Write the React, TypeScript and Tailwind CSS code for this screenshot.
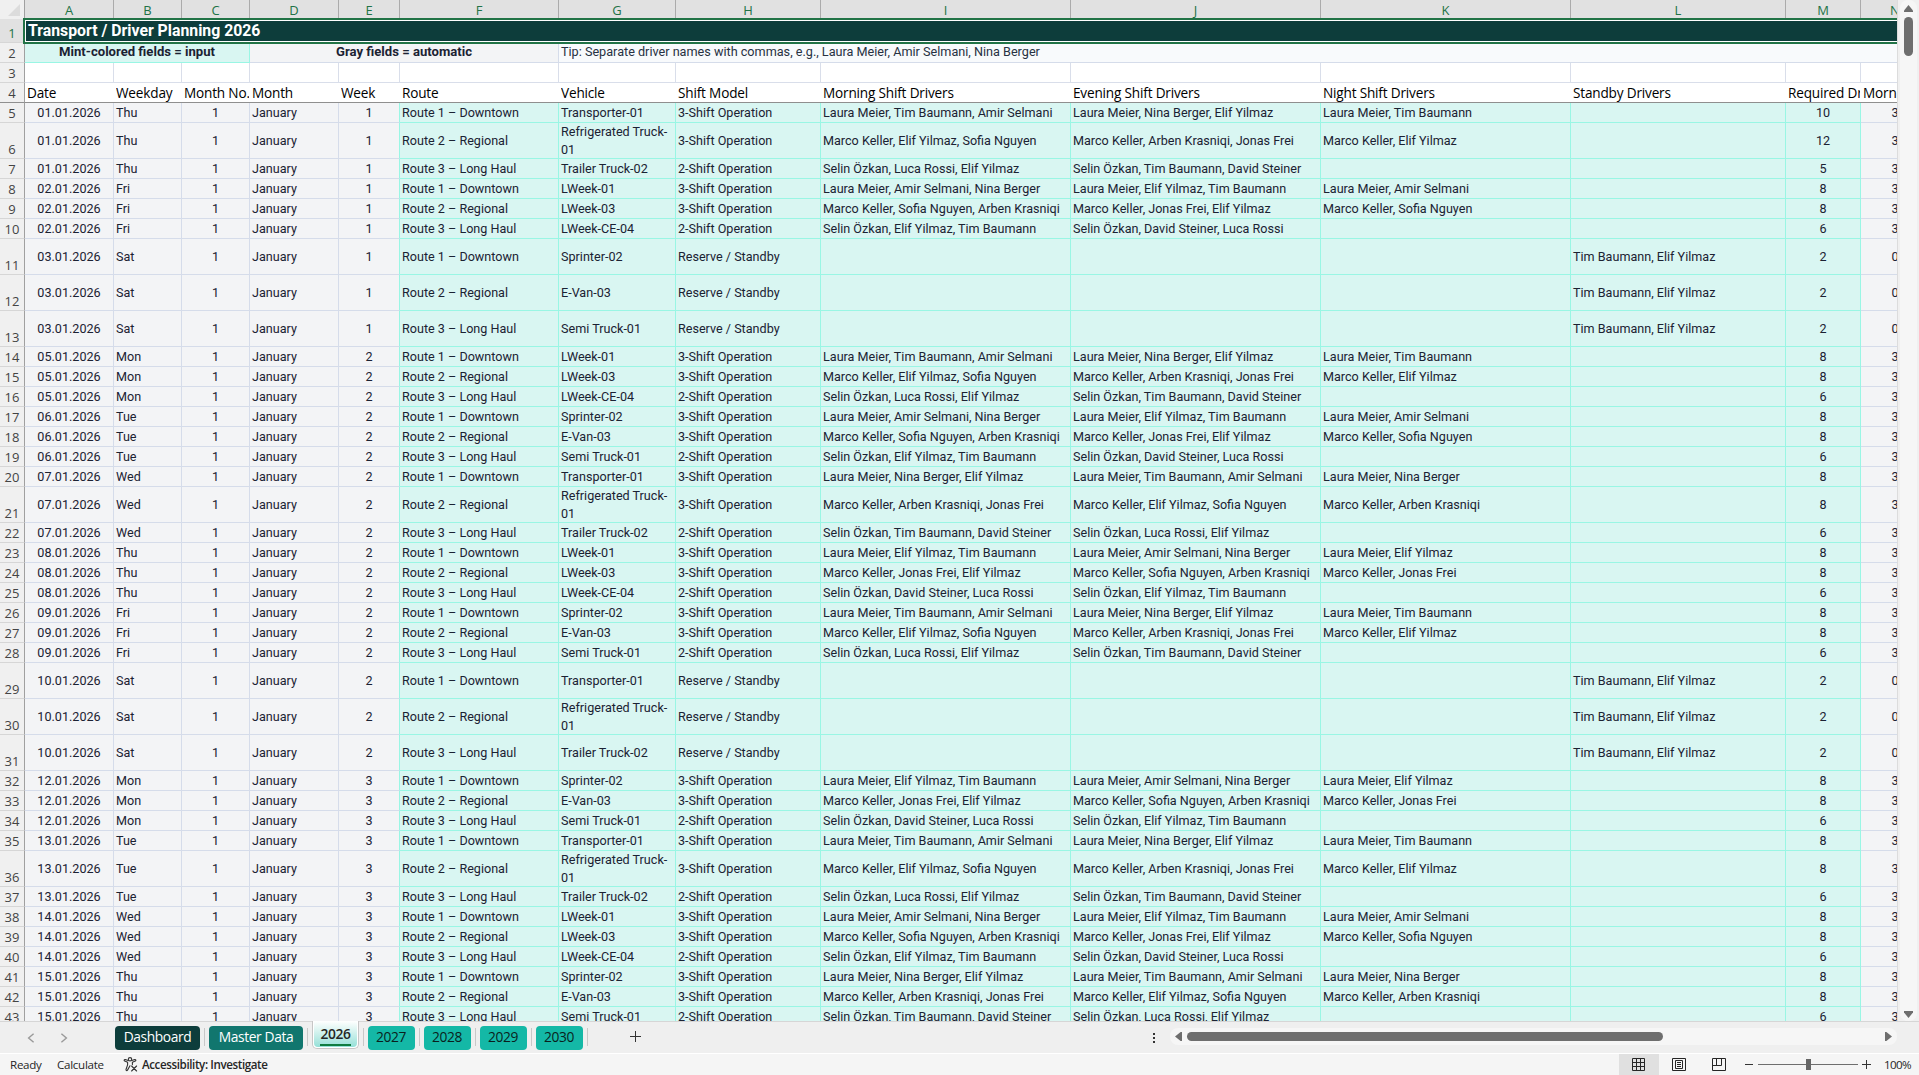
import React from "react";

type Shift = [string, string, string, string, string];
type Trip = {
  row: number;
  date: string;
  day: string;
  week: number;
  route: number;
  vehicle: string;
  drivers: Shift;
  required: number;
};

const COLUMNS = ["A", "B", "C", "D", "E", "F", "G", "H", "I", "J", "K", "L", "M", "N"];
const GRID =
  "grid shrink-0 grid-rows-[minmax(0,1fr)] grid-cols-[25px_89px_68px_68px_89px_61px_159px_117px_145px_250px_250px_250px_215px_75px_69px]";

const HEADINGS = [
  "Date", "Weekday", "Month No.", "Month", "Week", "Route", "Vehicle", "Shift Model",
  "Morning Shift Drivers", "Evening Shift Drivers", "Night Shift Drivers",
  "Standby Drivers", "Required Drivers", "Morning Drivers",
];

const ROUTES = ["Route 1 – Downtown", "Route 2 – Regional", "Route 3 – Long Haul"];

const RAW = `01.01.2026|Thu|1|Transporter-01|Laura Meier, Tim Baumann, Amir Selmani|Laura Meier, Nina Berger, Elif Yilmaz|Laura Meier, Tim Baumann|10
01.01.2026|Thu|1|Refrigerated Truck-01|Marco Keller, Elif Yilmaz, Sofia Nguyen|Marco Keller, Arben Krasniqi, Jonas Frei|Marco Keller, Elif Yilmaz|12
01.01.2026|Thu|1|Trailer Truck-02|Selin Özkan, Luca Rossi, Elif Yilmaz|Selin Özkan, Tim Baumann, David Steiner||5
02.01.2026|Fri|1|LWeek-01|Laura Meier, Amir Selmani, Nina Berger|Laura Meier, Elif Yilmaz, Tim Baumann|Laura Meier, Amir Selmani|8
02.01.2026|Fri|1|LWeek-03|Marco Keller, Sofia Nguyen, Arben Krasniqi|Marco Keller, Jonas Frei, Elif Yilmaz|Marco Keller, Sofia Nguyen|8
02.01.2026|Fri|1|LWeek-CE-04|Selin Özkan, Elif Yilmaz, Tim Baumann|Selin Özkan, David Steiner, Luca Rossi||6
03.01.2026|Sat|1|Sprinter-02||||2
03.01.2026|Sat|1|E-Van-03||||2
03.01.2026|Sat|1|Semi Truck-01||||2
05.01.2026|Mon|2|LWeek-01|Laura Meier, Tim Baumann, Amir Selmani|Laura Meier, Nina Berger, Elif Yilmaz|Laura Meier, Tim Baumann|8
05.01.2026|Mon|2|LWeek-03|Marco Keller, Elif Yilmaz, Sofia Nguyen|Marco Keller, Arben Krasniqi, Jonas Frei|Marco Keller, Elif Yilmaz|8
05.01.2026|Mon|2|LWeek-CE-04|Selin Özkan, Luca Rossi, Elif Yilmaz|Selin Özkan, Tim Baumann, David Steiner||6
06.01.2026|Tue|2|Sprinter-02|Laura Meier, Amir Selmani, Nina Berger|Laura Meier, Elif Yilmaz, Tim Baumann|Laura Meier, Amir Selmani|8
06.01.2026|Tue|2|E-Van-03|Marco Keller, Sofia Nguyen, Arben Krasniqi|Marco Keller, Jonas Frei, Elif Yilmaz|Marco Keller, Sofia Nguyen|8
06.01.2026|Tue|2|Semi Truck-01|Selin Özkan, Elif Yilmaz, Tim Baumann|Selin Özkan, David Steiner, Luca Rossi||6
07.01.2026|Wed|2|Transporter-01|Laura Meier, Nina Berger, Elif Yilmaz|Laura Meier, Tim Baumann, Amir Selmani|Laura Meier, Nina Berger|8
07.01.2026|Wed|2|Refrigerated Truck-01|Marco Keller, Arben Krasniqi, Jonas Frei|Marco Keller, Elif Yilmaz, Sofia Nguyen|Marco Keller, Arben Krasniqi|8
07.01.2026|Wed|2|Trailer Truck-02|Selin Özkan, Tim Baumann, David Steiner|Selin Özkan, Luca Rossi, Elif Yilmaz||6
08.01.2026|Thu|2|LWeek-01|Laura Meier, Elif Yilmaz, Tim Baumann|Laura Meier, Amir Selmani, Nina Berger|Laura Meier, Elif Yilmaz|8
08.01.2026|Thu|2|LWeek-03|Marco Keller, Jonas Frei, Elif Yilmaz|Marco Keller, Sofia Nguyen, Arben Krasniqi|Marco Keller, Jonas Frei|8
08.01.2026|Thu|2|LWeek-CE-04|Selin Özkan, David Steiner, Luca Rossi|Selin Özkan, Elif Yilmaz, Tim Baumann||6
09.01.2026|Fri|2|Sprinter-02|Laura Meier, Tim Baumann, Amir Selmani|Laura Meier, Nina Berger, Elif Yilmaz|Laura Meier, Tim Baumann|8
09.01.2026|Fri|2|E-Van-03|Marco Keller, Elif Yilmaz, Sofia Nguyen|Marco Keller, Arben Krasniqi, Jonas Frei|Marco Keller, Elif Yilmaz|8
09.01.2026|Fri|2|Semi Truck-01|Selin Özkan, Luca Rossi, Elif Yilmaz|Selin Özkan, Tim Baumann, David Steiner||6
10.01.2026|Sat|2|Transporter-01||||2
10.01.2026|Sat|2|Refrigerated Truck-01||||2
10.01.2026|Sat|2|Trailer Truck-02||||2
12.01.2026|Mon|3|Sprinter-02|Laura Meier, Elif Yilmaz, Tim Baumann|Laura Meier, Amir Selmani, Nina Berger|Laura Meier, Elif Yilmaz|8
12.01.2026|Mon|3|E-Van-03|Marco Keller, Jonas Frei, Elif Yilmaz|Marco Keller, Sofia Nguyen, Arben Krasniqi|Marco Keller, Jonas Frei|8
12.01.2026|Mon|3|Semi Truck-01|Selin Özkan, David Steiner, Luca Rossi|Selin Özkan, Elif Yilmaz, Tim Baumann||6
13.01.2026|Tue|3|Transporter-01|Laura Meier, Tim Baumann, Amir Selmani|Laura Meier, Nina Berger, Elif Yilmaz|Laura Meier, Tim Baumann|8
13.01.2026|Tue|3|Refrigerated Truck-01|Marco Keller, Elif Yilmaz, Sofia Nguyen|Marco Keller, Arben Krasniqi, Jonas Frei|Marco Keller, Elif Yilmaz|8
13.01.2026|Tue|3|Trailer Truck-02|Selin Özkan, Luca Rossi, Elif Yilmaz|Selin Özkan, Tim Baumann, David Steiner||6
14.01.2026|Wed|3|LWeek-01|Laura Meier, Amir Selmani, Nina Berger|Laura Meier, Elif Yilmaz, Tim Baumann|Laura Meier, Amir Selmani|8
14.01.2026|Wed|3|LWeek-03|Marco Keller, Sofia Nguyen, Arben Krasniqi|Marco Keller, Jonas Frei, Elif Yilmaz|Marco Keller, Sofia Nguyen|8
14.01.2026|Wed|3|LWeek-CE-04|Selin Özkan, Elif Yilmaz, Tim Baumann|Selin Özkan, David Steiner, Luca Rossi||6
15.01.2026|Thu|3|Sprinter-02|Laura Meier, Nina Berger, Elif Yilmaz|Laura Meier, Tim Baumann, Amir Selmani|Laura Meier, Nina Berger|8
15.01.2026|Thu|3|E-Van-03|Marco Keller, Arben Krasniqi, Jonas Frei|Marco Keller, Elif Yilmaz, Sofia Nguyen|Marco Keller, Arben Krasniqi|8
15.01.2026|Thu|3|Semi Truck-01|Selin Özkan, Tim Baumann, David Steiner|Selin Özkan, Luca Rossi, Elif Yilmaz||6`;

const TRIPS: Trip[] = RAW.split("\n").map((line, i) => {
  const [date, day, week, vehicle, morning, evening, night, required] = line.split("|");
  const reserve = day === "Sat";
  const model = reserve ? "Reserve / Standby" : i % 3 === 2 ? "2-Shift Operation" : "3-Shift Operation";
  return {
    row: i + 5,
    date,
    day,
    week: Number(week),
    route: i % 3,
    vehicle,
    drivers: [model, morning, evening, night, reserve ? "Tim Baumann, Elif Yilmaz" : ""],
    required: Number(required),
  };
});

function RowNumber({ n, active = false, frozen = false }: { n: number; active?: boolean; frozen?: boolean }) {
  return (
    <div
      className={`flex items-end justify-center border-r border-b border-r-[#a0a0a0] font-['Open_Sans',sans-serif] text-[13px] leading-[18px] ${
        active ? "bg-[#e1e1e1] text-[#217346]" : "bg-[#f0f0f0] text-[#444444]"
      } ${frozen ? "border-b-[#8f8f8f]" : "border-b-[#d6d6d6]"}`}
    >
      {n}
    </div>
  );
}

function Auto({ children, center = false, mintEdge = false }: { children: React.ReactNode; center?: boolean; mintEdge?: boolean }) {
  return (
    <div
      className={`flex items-center border-r border-b border-b-[#d5dcea] bg-[#f3f4f6] ${
        mintEdge ? "border-r-[#99f6e4]" : "border-r-[#d5dcea]"
      } ${center ? "justify-center" : "pl-[2px]"}`}
    >
      {children}
    </div>
  );
}

function Input({ children, center = false, wrap = false }: { children?: React.ReactNode; center?: boolean; wrap?: boolean }) {
  return (
    <div
      className={`flex min-h-0 items-center border-r border-b border-[#99f6e4] bg-[#d9f6f2] ${
        center ? "justify-center" : "pl-[2px]"
      } ${wrap ? "leading-[18px] whitespace-normal" : ""}`}
    >
      {children}
    </div>
  );
}

function TripRow({ trip }: { trip: Trip }) {
  const wraps = trip.vehicle.startsWith("Refrigerated");
  const reserve = trip.day === "Sat";
  return (
    <div className={`${GRID} ${wraps || reserve ? "h-[36px]" : "h-[20px]"}`}>
      <RowNumber n={trip.row} />
      <Auto center>{trip.date}</Auto>
      <Auto>{trip.day}</Auto>
      <Auto center>1</Auto>
      <Auto>January</Auto>
      <Auto center mintEdge>{trip.week}</Auto>
      <Input>{ROUTES[trip.route]}</Input>
      <Input wrap={wraps}>
        {wraps ? <span>Refrigerated Truck-<br />01</span> : trip.vehicle}
      </Input>
      {trip.drivers.map((d, i) => (
        <Input key={i}>{d}</Input>
      ))}
      <Input center>{trip.required}</Input>
      <Auto center>{reserve ? 0 : 3}</Auto>
    </div>
  );
}

function Sheet() {
  return (
    <div className="relative flex h-[1021px] w-[1897px] flex-col overflow-hidden bg-white font-['Roboto',sans-serif] text-[12.6px] leading-[18px] whitespace-nowrap text-[#1b2233]">
      <div className={`${GRID} h-[19px] bg-[#e1e1e1]`}>
        <div className="flex items-end justify-end border-r border-[#a0a0a0] bg-[#f0f0f0] pr-[4px] pb-[3px]">
          <svg width="12" height="12" viewBox="0 0 12 12">
            <path d="M12 0v12H0z" fill="#dcdcdc" />
          </svg>
        </div>
        {COLUMNS.map((c) => (
          <div
            key={c}
            className="border-r border-[#ababab] text-center font-['Open_Sans',sans-serif] text-[13px] leading-[20px] text-[#217346]"
          >
            {c}
          </div>
        ))}
      </div>

      <div className={`${GRID} h-[24px]`}>
        <RowNumber n={1} active />
        <div className="col-span-14 flex items-center bg-[#0d3d3b] pl-[3px] text-[15.8px] font-bold text-white">
          Transport / Driver Planning 2026
        </div>
      </div>

      <div className={`${GRID} h-[20px]`}>
        <RowNumber n={2} />
        <div className="col-span-3 flex items-center justify-center border-r border-b border-[#99f6e4] bg-[#d9f6f2] pb-[1px] text-[13.1px] font-bold">
          Mint-colored fields = input
        </div>
        <div className="col-span-3 flex items-center justify-center border-r border-b border-[#d5dcea] bg-[#f3f4f6] pb-[1px] text-[13.1px] font-bold">
          Gray fields = automatic
        </div>
        <div className="col-span-8 flex items-center border-b border-[#d5dcea] bg-[#f8fafc] pb-[1px] pl-[2px] text-[12.65px] text-[#273142]">
          Tip: Separate driver names with commas, e.g., Laura Meier, Amir Selmani, Nina Berger
        </div>
      </div>

      <div className={`${GRID} h-[20px]`}>
        <RowNumber n={3} />
        {COLUMNS.map((c) => (
          <div key={c} className="border-r border-b border-[#d9deea]" />
        ))}
      </div>

      <div className={`${GRID} h-[20px]`}>
        <RowNumber n={4} frozen />
        {HEADINGS.map((h) => (
          <div key={h} className="min-w-0 border-b border-[#8f8f8f] pr-px pl-[2px]">
            <div className="h-[19px] overflow-hidden font-['Open_Sans',sans-serif] text-[13.6px] leading-[20px] tracking-[-0.18px] text-black">
              {h}
            </div>
          </div>
        ))}
      </div>

      {TRIPS.map((t) => (
        <TripRow key={t.row} trip={t} />
      ))}

      {/* selection frame around the merged title cell */}
      <div className="absolute top-[18px] left-[23px] h-[26px] w-[1900px] border-2 border-[#217346]">
        <div className="h-full w-full border border-white" />
      </div>
    </div>
  );
}

function VerticalScroll() {
  return (
    <div className="flex h-[1021px] w-[22px] justify-center border-l border-[#dcdcdc] bg-[#f0f0f0] pr-[1px]">
      <div className="flex w-[17px] flex-col items-center rounded-[8px] bg-[#f6f6f6] pt-[5px] pb-[3px]">
        <svg width="9" height="7" viewBox="0 0 9 7">
          <path d="M4.5 0 9 5.6V7H0V5.6z" fill="#6e6e6e" />
        </svg>
        <div className="mt-[5px] h-[39px] w-[9px] rounded-full bg-[#6e6e6e]" />
        <svg className="mt-auto" width="9" height="7" viewBox="0 0 9 7">
          <path d="M4.5 7 9 1.4V0H0v1.4z" fill="#6e6e6e" />
        </svg>
      </div>
    </div>
  );
}

function Divider() {
  return <div className="mx-[4px] mt-[6px] h-[18px] w-px shrink-0 bg-[#c8c8c8]" />;
}

const TAB = "mt-[4px] flex h-[24px] shrink-0 items-center justify-center rounded-[4px] pb-[1px]";

function TabBar() {
  return (
    <div className="flex h-[32px] border-t border-[#d6d6d6] bg-[#efefef] font-['Open_Sans',sans-serif] text-[13.8px] tracking-[-0.4px]">
      <div className="flex w-[115px] items-center gap-[25px] pl-[27px]">
        <svg width="8" height="10" viewBox="0 0 8 10" fill="none" stroke="#9a9a9a" strokeWidth="1.4">
          <path d="M6.6.7 1.6 5l5 4.3" />
        </svg>
        <svg width="8" height="10" viewBox="0 0 8 10" fill="none" stroke="#9a9a9a" strokeWidth="1.4">
          <path d="m1.4.7 5 4.3-5 4.3" />
        </svg>
      </div>
      <div className={`${TAB} w-[85px] bg-[#0d3d3b] text-white`}>Dashboard</div>
      <Divider />
      <div className={`${TAB} w-[94px] bg-[#11766e] text-white`}>Master Data</div>
      <Divider />
      <div className="-mt-px flex h-[28px] w-[47px] shrink-0 rounded-b-[5px] border-x border-b border-[#c6c6c6] bg-white px-[1px] pb-[1px]">
        <div className="flex w-full flex-col items-center rounded-b-[4px] bg-linear-to-b from-white to-[#94e0d8]">
          <div className="mt-[3px] text-[13.8px] leading-[19px] font-semibold text-[#262626]">2026</div>
          <div className="mt-px h-[2px] w-[31px] bg-[#107c41]" />
        </div>
      </div>
      <Divider />
      {["2027", "2028", "2029", "2030"].map((y) => (
        <React.Fragment key={y}>
          <div className={`${TAB} w-[47px] bg-[#14b8a6] pr-[1px] text-[#0a1f1c]`}>{y}</div>
          <Divider />
        </React.Fragment>
      ))}
      <svg className="mt-[9px] ml-[38px] shrink-0" width="12" height="12" viewBox="0 0 12 12" stroke="#333" strokeWidth="1">
        <path d="M5.5 0v11M0 5.5h11" />
      </svg>
      <div className="ml-auto flex shrink-0">
        <div className="mt-[11px] flex flex-col gap-[2px]">
          <span className="h-[2px] w-[2px] bg-[#333]" />
          <span className="h-[2px] w-[2px] bg-[#333]" />
          <span className="h-[2px] w-[2px] bg-[#333]" />
        </div>
        <div className="mt-[6px] mr-[22px] ml-[15px] flex h-[17px] w-[727px] items-center rounded-[8px] bg-[#f6f6f6] pr-[5px] pl-[5px]">
          <svg width="7" height="9" viewBox="0 0 7 9">
            <path d="M0 4.5 5.6 0H7v9H5.6z" fill="#6e6e6e" />
          </svg>
          <div className="ml-[5px] h-[9px] w-[476px] rounded-full bg-[#6e6e6e]" />
          <svg className="ml-auto" width="7" height="9" viewBox="0 0 7 9">
            <path d="M7 4.5 1.4 0H0v9h1.4z" fill="#6e6e6e" />
          </svg>
        </div>
      </div>
    </div>
  );
}

function StatusBar() {
  return (
    <div className="flex h-[22px] items-center border-t border-white bg-[#f5f5f5] font-['Open_Sans',sans-serif] text-[11.6px] tracking-[-0.28px] text-[#262626]">
      <span className="ml-[10px] w-[47px] pt-[1px]">Ready</span>
      <span className="w-[66px] pt-[1px]">Calculate</span>
      <svg className="shrink-0" width="15" height="15" viewBox="0 0 15 15" fill="none" stroke="#333" strokeWidth="1.1" strokeLinecap="round" strokeLinejoin="round">
        <circle cx="7" cy="2.3" r="1.7" />
        <path d="M5.2 3.6 2.3 2.5c-1-.3-1.7.9-.6 1.4l2.9 1.4v2.6l-1.6 4.6c-.3 1.1 1 1.6 1.5.6L7 8.8M8.8 3.6l2.9-1.1c1-.3 1.7.9.6 1.4L9.4 5.3v2.3" />
        <path d="m8.6 9 5 5M13.6 9l-5 5" />
      </svg>
      <span className="ml-[4px] font-semibold tracking-[-0.4px]">Accessibility: Investigate</span>
      <div className="ml-auto flex h-full items-center">
        <div className="flex h-full w-[40px] items-center justify-center bg-[#e0e0e0]">
          <svg width="14" height="14" viewBox="0 0 14 14" fill="none" stroke="#262626">
            <path d="M.5.5h12v12H.5zM4.5.5v12M8.5.5v12M.5 4.5h12M.5 8.5h12" />
          </svg>
        </div>
        <div className="flex w-[40px] items-center justify-center">
          <svg width="14" height="14" viewBox="0 0 14 14" fill="none" stroke="#262626">
            <path d="M.5.5h13v12H.5zM3.5 2.5h7v8h-7zM5 4.5h4M5 6.5h4M5 8.5h4" />
          </svg>
        </div>
        <div className="flex w-[40px] items-center justify-center">
          <svg width="14" height="14" viewBox="0 0 14 14" fill="none" stroke="#262626">
            <path d="M.5.5h13v12H.5zM4.5.5v7M9.5.5v7M.5 7.5h9" />
          </svg>
        </div>
        <div className="ml-[6px] h-px w-[8px] bg-[#333]" />
        <div className="relative ml-[5px] h-px w-[100px] bg-[#6e6e6e]">
          <div className="absolute -top-[5px] left-[48px] h-[11px] w-[5px] bg-[#666]" />
        </div>
        <svg className="ml-[4px]" width="9" height="9" viewBox="0 0 9 9" stroke="#333">
          <path d="M4.5 0v9M0 4.5h9" />
        </svg>
        <span className="ml-[13px] w-[35px] tracking-[-0.65px]">100%</span>
      </div>
    </div>
  );
}

export default function App() {
  return (
    <div className="flex h-[1075px] w-[1919px] flex-col overflow-hidden bg-[#f0f0f0]">
      <div className="flex">
        <Sheet />
        <VerticalScroll />
      </div>
      <TabBar />
      <StatusBar />
    </div>
  );
}
